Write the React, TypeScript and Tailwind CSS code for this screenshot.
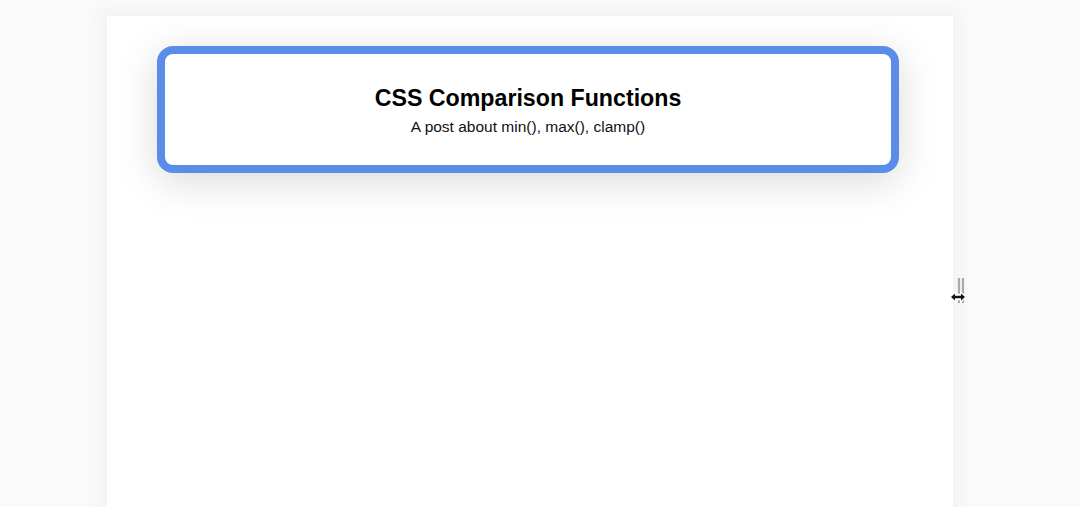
import React from 'react';

const ResizeCursor = () => (
  <svg className="absolute left-[949px] top-[276px]" width="20" height="30" viewBox="0 0 20 30" fill="none">
    <path d="M10 2V27M14 2V27" stroke="#aaa" strokeWidth="2.2" />
    <path d="M1 21L6 16.5V18.5H12V16.5L17 21L12 25.5V23.5H6V25.5Z" fill="#fff" stroke="#fff" strokeWidth="1.6" />
    <path d="M2 21L6 17.5V19.8H12V17.5L16 21L12 24.5V22.2H6V24.5Z" fill="#111" />
  </svg>
);

export default function App() {
  return (
    <div className="relative h-[507px] w-[1080px] overflow-hidden bg-[#fafafa] pt-[16px] pl-[107px] font-['Liberation_Sans',Arial,sans-serif]">
      <div className="h-[520px] w-[846px] bg-white pr-[54px] pl-[50px] pt-[30px] shadow-[0_0_16px_8px_rgba(0,0,0,0.03)]">
        <div className="flex h-[127px] w-[742px] flex-col items-center rounded-[16px] border-[8px] border-[#5a8de8] bg-white pt-[29px] text-center text-black shadow-[0_8px_40px_rgba(0,0,0,0.15)]">
          <h1 className="text-[23.2px] leading-[30px] font-bold">CSS Comparison Functions</h1>
          <p className="mt-[5px] text-[15.5px] leading-[18px] text-[#111]">A post about min(), max(), clamp()</p>
        </div>
      </div>
      <ResizeCursor />
    </div>
  );
}
